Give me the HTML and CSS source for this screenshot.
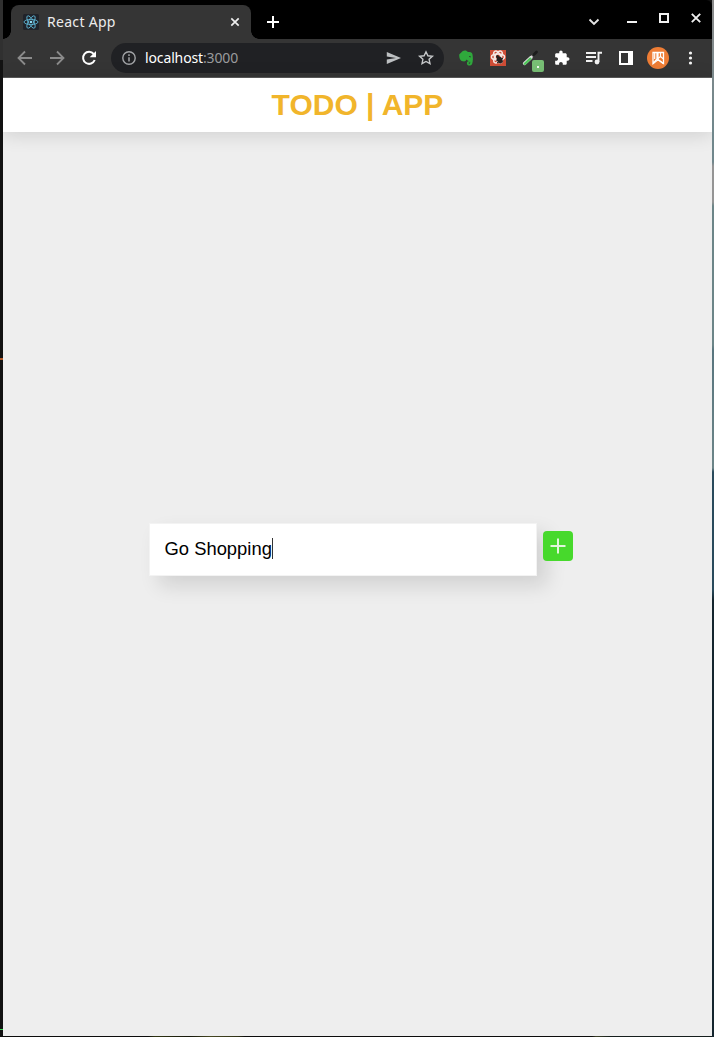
FILE: index.html
```
<!DOCTYPE html>
<html lang="en">
<head>
<meta charset="utf-8">
<title>React App</title>
<link rel="stylesheet" href="styles.css">
</head>
<body>
<div class="desktop">
<div class="window">
  <div class="titlebar">
    <div class="tab">
      <svg class="favicon" width="16" height="16" viewBox="0 0 16 16"><rect width="16" height="16" rx="1.5" fill="#20232a"/><g fill="none" stroke="#5fb8d8" stroke-width=".85"><ellipse cx="8" cy="8" rx="7" ry="2.6"/><ellipse cx="8" cy="8" rx="7" ry="2.6" transform="rotate(60 8 8)"/><ellipse cx="8" cy="8" rx="7" ry="2.6" transform="rotate(120 8 8)"/></g><circle cx="8" cy="8" r="1.3" fill="#8ddcf5"/></svg>
      <span class="tab-title">React App</span>
      <svg class="tab-close" width="10" height="10" viewBox="0 0 10 10"><path d="M1.3 1.3l7.4 7.4M8.7 1.3L1.3 8.7" stroke="#eee" stroke-width="1.7"/></svg>
    </div>
    <svg class="new-tab" width="12" height="12" viewBox="0 0 12 12"><path d="M6 0v12M0 6h12" stroke="#fff" stroke-width="2"/></svg>
    <div class="controls">
      <svg class="chevron" width="32" height="32" viewBox="0 0 32 32"><path d="M11.500 13.500l4.500 4.500 4.500-4.500" fill="none" stroke="#e4e4e4" stroke-width="1.900"/></svg>
      <svg width="32" height="32" viewBox="0 0 32 32"><path d="M11 16h10" stroke="#f2f2f2" stroke-width="2"/></svg>
      <svg width="32" height="32" viewBox="0 0 32 32"><rect x="12" y="8" width="8" height="8" fill="none" stroke="#f2f2f2" stroke-width="2"/></svg>
      <svg width="32" height="32" viewBox="0 0 32 32"><path d="M11.8 7.8l8.4 8.4M20.2 7.8l-8.4 8.4" stroke="#eee" stroke-width="1.9"/></svg>
    </div>
  </div>
  <div class="toolbar">
    <svg class="tool" viewBox="0 0 32 32"><path d="M23 16H10M16 9.5L9.5 16l6.5 6.5" fill="none" stroke="#8b8b8b" stroke-width="1.8"/></svg>
    <svg class="tool" viewBox="0 0 32 32"><path d="M9 16h13M16 9.5l6.5 6.5-6.5 6.5" fill="none" stroke="#8b8b8b" stroke-width="1.8"/></svg>
    <svg class="tool" viewBox="0 0 32 32"><path d="M20.7 12A6 6 0 1 0 21.7 18" fill="none" stroke="#fff" stroke-width="2"/><path d="M23 9v6.3h-6.3z" fill="#fff"/></svg>
    <div class="omnibox">
      <svg width="14" height="14" viewBox="0 0 14 14"><circle cx="7" cy="7" r="6.2" fill="none" stroke="#a2a4a7" stroke-width="1.4"/><path d="M7 6.2v4.2M7 3.3v1.6" stroke="#a2a4a7" stroke-width="1.5"/></svg>
      <span class="url">localhost<span class="port">:3000</span></span>
      <svg class="tool" viewBox="0 0 32 32"><path d="M8.800 10L23 16 8.800 22v-4.600L18 16l-9.200-1.400z" fill="#bdc0c2"/></svg>
      <svg class="tool" viewBox="0 0 32 32"><path d="M16 9.800l1.900 4 4.500.5-3.300 3 .9 4.400-4-2.200-4 2.200.9-4.400-3.300-3 4.500-.5z" fill="none" stroke="#c6c8ca" stroke-width="1.400"/></svg>
    </div>
    <svg class="tool" viewBox="0 0 32 32"><path d="M9.200 12.500L12.500 9.300C14 7.800 17.200 8.300 17.800 10c2 0 4.400.2 4.600 2 .8 3.700.6 7.600-.3 10-1.300 2.400-5.300 2-5.200-.8 0-1.600 1.200-2.400 3-2.200v1.500c-1-.1-1.400.2-1.300.8.2.8 1.500.6 1.600-.6l-.2-1.600c-1.500 0-2.700-.5-3.400-1.500-.7 1.700-2 2.100-3.900 1.700-2.600-.4-3.500-3.500-3.500-6.800z" fill="#2fa83c"/><path d="M19 14.700q1.200-.8 2 .6" fill="none" stroke="#353535" stroke-width=".9"/></svg>
    <svg class="tool" viewBox="0 0 32 32"><path d="M8 8h16v16H8z" fill="#cf4d36"/><g fill="none" stroke="#f6e8e4" stroke-width="1.500"><ellipse cx="16" cy="15" rx="6.600" ry="2.900"/><ellipse cx="16" cy="15" rx="6.600" ry="2.900" transform="rotate(60 16 15)"/><ellipse cx="16" cy="15" rx="6.600" ry="2.900" transform="rotate(120 16 15)"/></g><ellipse cx="17.800" cy="18" rx="2.700" ry="3.500" transform="rotate(-25 17.800 18)" fill="#27201f"/><circle cx="15.500" cy="14.500" r="1.500" fill="#27201f"/><path d="M14 18l7 2M15 21l6-5" stroke="#27201f" stroke-width="1"/></svg>
    <svg class="tool" viewBox="0 0 32 32"><path d="M16.500 15.500l3.500-3" stroke="#aaa" stroke-width="2"/><path d="M19.500 13l3-3" stroke="#1c1c1c" stroke-width="2.800" stroke-linecap="round"/><path d="M10.500 21.500l6.500-6" stroke="#ddd" stroke-width="3.300" stroke-linecap="round"/><path d="M10.800 21.800l5.600-5.100" stroke="#51c65b" stroke-width="2.300" stroke-linecap="round"/><rect x="18" y="18" width="12" height="12" rx="2" fill="#78bf75"/><path d="M23 24h2v2h-2z" fill="#eef8ed"/></svg>
    <svg class="tool" viewBox="0 0 32 32"><path transform="translate(7.8 7.8) scale(.68)" d="M20.500 11H19V7c0-1.100-.9-2-2-2h-4V3.500C13 2.120 11.880 1 10.500 1S8 2.120 8 3.500V5H4c-1.100 0-1.990.9-1.990 2v3.800H3.500c1.490 0 2.700 1.210 2.700 2.700s-1.210 2.700-2.700 2.700H2V20c0 1.100.9 2 2 2h3.800v-1.500c0-1.490 1.210-2.700 2.700-2.700 1.490 0 2.700 1.210 2.700 2.700V22H17c1.100 0 2-.9 2-2v-4h1.500c1.380 0 2.500-1.120 2.500-2.500S21.880 11 20.500 11z" fill="#fff"/></svg>
    <svg class="tool" viewBox="0 0 32 32"><path d="M8 11h10M8 15h10M8 19h6.500M20.500 20v-9.200H24" fill="none" stroke="#f1f1f1" stroke-width="1.900"/><circle cx="19" cy="20" r="2.400" fill="#f1f1f1"/></svg>
    <svg class="tool" viewBox="0 0 32 32"><path d="M10 10h12v12H10z" fill="none" stroke="#fff" stroke-width="2"/><path d="M18 10h5v12h-5z" fill="#fff"/></svg>
    <svg class="tool" viewBox="0 0 32 32"><circle cx="16" cy="16" r="11" fill="#ee7d35"/><path d="M11 10.500h4v6.500l-4 4.500zM16 10.500h5.500v11l-5.500-4z" fill="none" stroke="#fff" stroke-width="1.300"/><path d="M12.700 11v6M11 21.800l5-4 5.500 4M16 16.500l2.500-2 3 2.500M18.500 11v3" fill="none" stroke="#fff" stroke-width="1.200"/></svg>
    <svg class="tool" viewBox="0 0 32 32"><g fill="#f5f5f5"><circle cx="16.500" cy="11" r="1.600"/><circle cx="16.500" cy="16" r="1.600"/><circle cx="16.500" cy="21" r="1.600"/></g></svg>
  </div>
  <div class="page">
    <header class="app-header"><h1>TODO | APP</h1></header>
    <main class="todo">
      <div class="todo-field">Go Shopping<span class="caret"></span></div>
      <button class="add" aria-label="Add"><svg width="16" height="16" viewBox="0 0 16 16"><path d="M8 .5v15M.5 8h15" stroke="#e1f5dc" stroke-width="2"/></svg></button>
    </main>
  </div>
</div>
</div>
</body>
</html>
```
FILE: styles.css
```
* { box-sizing: border-box; }
body { margin: 0; }
svg { display: block; flex: none; }
.desktop {
  width: 714px;
  height: 1037px;
  padding: 0 2px 1px 3px;
  background:
    linear-gradient(#39d353, #39d353) 0 1029px / 3px 1px no-repeat,
    linear-gradient(#b45a28, #b45a28) 0 358px / 3px 2px no-repeat,
    linear-gradient(#303030, #303030) 0 0 / 3px 60px no-repeat,
    linear-gradient(#8c8c8c 0, #70878c 130px, #70878c 162px, #959595 166px, #959595 202px, #6c8588 206px, #6c8588 345px, #58757e 350px, #6c8588 468px, #294a5c 472px, #294a5c 590px, #14252e 600px, #14252e) 712px 0 / 2px 1037px no-repeat,
    linear-gradient(90deg, #0c0c0c 148px, #303412 155px, #15170c 190px, #474822 210px, #303218 238px, #0c0c0c 245px, #0c0c0c 592px, #3d4028 596px, #151e1d 610px) 0 1036px / 714px 1px no-repeat,
    #121212;
}
.window { display: flex; flex-direction: column; width: 709px; height: 1036px; border-radius: 0 6px 0 0; overflow: hidden; background: #000; }
.titlebar { display: flex; height: 39px; padding-left: 8px; }
.tab {
  display: flex;
  align-items: center;
  width: 240px;
  height: 34px;
  margin-top: 5px;
  padding: 0 11px 0 12px;
  background: #353535;
  border-radius: 8px 8px 0 0;
  position: relative;
}
.tab::before, .tab::after { content: ""; position: absolute; bottom: 0; width: 8px; height: 8px; }
.tab::before { left: -8px; background: radial-gradient(circle at 0 0, transparent 7.5px, #353535 8px); }
.tab::after { right: -8px; background: radial-gradient(circle at 100% 0, transparent 7.5px, #353535 8px); }
.tab-title { flex: 1; margin-left: 8px; font: 14px/20px "Noto Sans", sans-serif; letter-spacing: .3px; color: #ececec; white-space: nowrap; }
.new-tab { margin: 16px 0 0 16px; }
.controls { display: flex; margin: 6px 0 0 auto; }
.chevron { margin-right: 6px; }
.toolbar { display: flex; align-items: center; height: 39px; padding-left: 6px; background: #353535; border-bottom: 1px solid #5c5c5c; flex: none; }
.tool { width: 32px; height: 32px; }
.omnibox { display: flex; align-items: center; width: 333px; height: 30px; margin: 0 6px; padding: 0 2px 0 11px; border-radius: 15px; background: #202124; }
.url { flex: 1; margin-left: 9px; font: 14px/20px "Noto Sans", sans-serif; letter-spacing: -.13px; color: #fff; }
.port { color: #9a9b9d; }
.page { display: flex; flex-direction: column; flex: 1; background: #eee; font-family: "Liberation Sans", Arial, sans-serif; }
.app-header { display: flex; align-items: center; justify-content: center; height: 54px; background: #fff; box-shadow: 0 2px 20px rgba(0, 0, 0, .14); }
.app-header h1 { margin: 0; font-size: 30px; line-height: 34px; color: #f1b52b; }
.todo { display: flex; margin: 391px 0 0 146px; }
.todo-field { display: flex; align-items: center; width: 388px; height: 53px; padding: 0 14.5px 2px; border: 1px solid #f3f3f3; background: #fff; color: #000; font-size: 18.4px; box-shadow: 10px 10px 20px rgba(0, 0, 0, .12); }
.caret { width: 1px; height: 21px; background: #333; }
.add { display: flex; align-items: center; justify-content: center; width: 30px; height: 30px; margin: 8px 0 0 6px; padding: 0; border: 0; border-radius: 4px; background: #47d92c; z-index: 1; }
```
